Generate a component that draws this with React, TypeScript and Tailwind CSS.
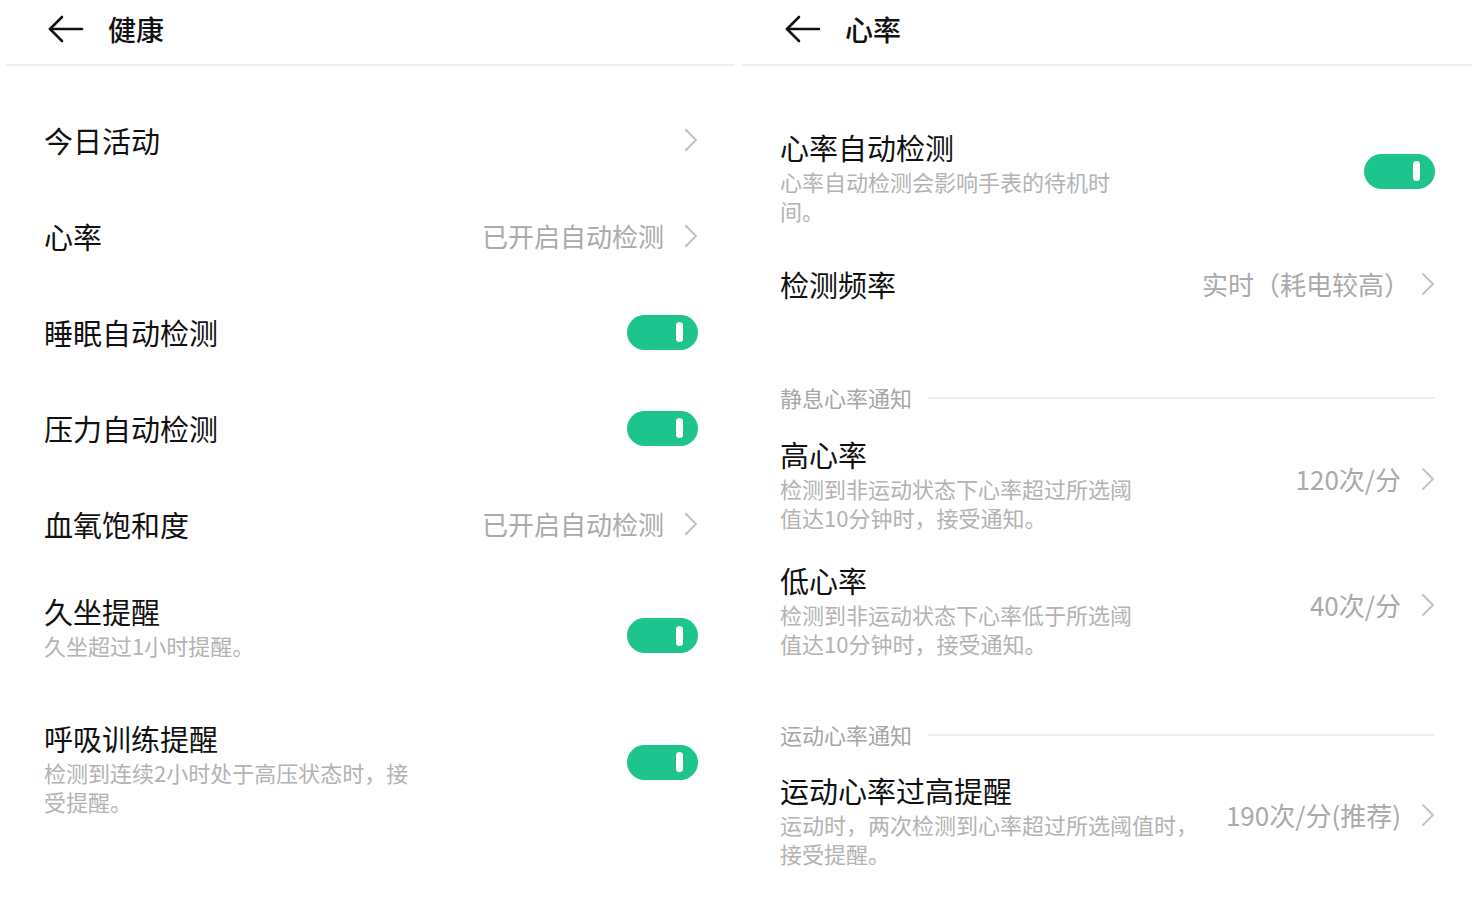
const font = { fontFamily: '"Noto Sans CJK SC", "Noto Sans", sans-serif' };

function BackArrow() {
  return (
    <svg width="36" height="28" viewBox="0 0 36 28" fill="none" stroke="#111" strokeWidth="2.6" strokeLinecap="round" strokeLinejoin="round">
      <path d="M14 2 L2 14 L14 26" />
      <path d="M2 14 H34" />
    </svg>
  );
}

function Chevron() {
  return (
    <svg width="14" height="24" viewBox="0 0 14 24" fill="none" stroke="#c2c2c2" strokeWidth="2" strokeLinecap="round" strokeLinejoin="round">
      <path d="M2 2 L12 12 L2 22" />
    </svg>
  );
}

function Toggle({ className = '' }: { className?: string }) {
  return (
    <div className={`w-[71px] h-[35px] rounded-full bg-[#1dc48e] flex items-center justify-end pr-[15px] shrink-0 ${className}`}>
      <div className="w-[7px] h-[20px] rounded-full bg-white" />
    </div>
  );
}

function Header({ title, pad }: { title: string; pad: string }) {
  return (
    <div className={`h-[64px] pb-[6px] flex items-center gap-[24px] ${pad}`}>
      <BackArrow />
      <span className="text-[28px] font-medium text-[#111] leading-none">{title}</span>
    </div>
  );
}

function Value({ text, gap = 'gap-[20px]' }: { text: string; gap?: string }) {
  return (
    <div className={`flex items-center shrink-0 ${gap}`}>
      <span className="text-[26px] text-[#aaaaaa] leading-none">{text}</span>
      <Chevron />
    </div>
  );
}

function SimpleRow({ title, value, toggle }: { title: string; value?: string; toggle?: boolean }) {
  return (
    <div className="h-[96px] flex items-center justify-between">
      <span className="text-[29px] text-[#111] leading-[40px]">{title}</span>
      {value && <Value text={value} />}
      {toggle && <Toggle />}
    </div>
  );
}

function Sub({ lines }: { lines: string[] }) {
  return (
    <div className="text-[22px] text-[#b3b3b3] leading-[29px]">
      {lines.map((l) => (
        <div key={l}>{l}</div>
      ))}
    </div>
  );
}

function Section({ title, className }: { title: string; className: string }) {
  return (
    <div className={`flex items-center gap-[16px] ${className}`}>
      <span className="text-[22px] text-[#a6a6a6] leading-[29px] shrink-0">{title}</span>
      <div className="flex-1 h-[2px] bg-[#eeeeee]" />
    </div>
  );
}

export default function App() {
  return (
    <div className="w-[1479px] h-[905px] bg-white flex gap-[5px] overflow-hidden" style={font}>
      {/* 健康 */}
      <div className="w-[737px] shrink-0 flex flex-col">
        <Header title="健康" pad="pl-[48px]" />
        <div className="h-[2px] bg-[#eeeeee] ml-[6px] mr-[2px]" />
        <div className="pl-[44px] pr-[39px] pt-[26px] flex flex-col">
          <div className="h-[96px] flex items-center justify-between">
            <span className="text-[29px] text-[#111] leading-[40px]">今日活动</span>
            <Chevron />
          </div>
          <SimpleRow title="心率" value="已开启自动检测" />
          <SimpleRow title="睡眠自动检测" toggle />
          <SimpleRow title="压力自动检测" toggle />
          <SimpleRow title="血氧饱和度" value="已开启自动检测" />

          <div className="flex items-center justify-between pt-[19px]">
            <div>
              <div className="text-[29px] text-[#111] leading-[40px]">久坐提醒</div>
              <Sub lines={['久坐超过1小时提醒。']} />
            </div>
            <Toggle className="mt-[20px]" />
          </div>

          <div className="flex items-center justify-between pt-[58px]">
            <div>
              <div className="text-[29px] text-[#111] leading-[40px]">呼吸训练提醒</div>
              <Sub lines={['检测到连续2小时处于高压状态时，接', '受提醒。']} />
            </div>
            <Toggle className="mb-[10px]" />
          </div>
        </div>
      </div>

      {/* 心率 */}
      <div className="w-[737px] shrink-0 flex flex-col">
        <Header title="心率" pad="pl-[43px]" />
        <div className="h-[2px] bg-[#eeeeee] mr-[7px]" />
        <div className="pl-[38px] pr-[44px] pt-[61px] flex flex-col">
          <div className="flex items-center justify-between">
            <div>
              <div className="text-[29px] text-[#111] leading-[40px]">心率自动检测</div>
              <Sub lines={['心率自动检测会影响手表的待机时', '间。']} />
            </div>
            <Toggle className="mb-[10px]" />
          </div>

          <div className="flex items-center justify-between mt-[39px] h-[40px]">
            <span className="text-[29px] text-[#111] leading-[40px]">检测频率</span>
            <Value text="实时（耗电较高）" gap="gap-[11px]" />
          </div>

          <Section title="静息心率通知" className="mt-[79px]" />

          <div className="flex items-center justify-between mt-[22px]">
            <div>
              <div className="text-[29px] text-[#111] leading-[40px]">高心率</div>
              <Sub lines={['检测到非运动状态下心率超过所选阈', '值达10分钟时，接受通知。']} />
            </div>
            <div className="mb-[8px]">
              <Value text="120次/分" />
            </div>
          </div>

          <div className="flex items-center justify-between mt-[28px]">
            <div>
              <div className="text-[29px] text-[#111] leading-[40px]">低心率</div>
              <Sub lines={['检测到非运动状态下心率低于所选阈', '值达10分钟时，接受通知。']} />
            </div>
            <div className="mb-[8px]">
              <Value text="40次/分" />
            </div>
          </div>

          <Section title="运动心率通知" className="mt-[62px]" />

          <div className="flex items-center justify-between mt-[21px]">
            <div>
              <div className="text-[29px] text-[#111] leading-[40px]">运动心率过高提醒</div>
              <Sub lines={['运动时，两次检测到心率超过所选阈值时，', '接受提醒。']} />
            </div>
            <div className="mb-[8px]">
              <Value text="190次/分(推荐)" />
            </div>
          </div>
        </div>
      </div>
    </div>
  );
}
